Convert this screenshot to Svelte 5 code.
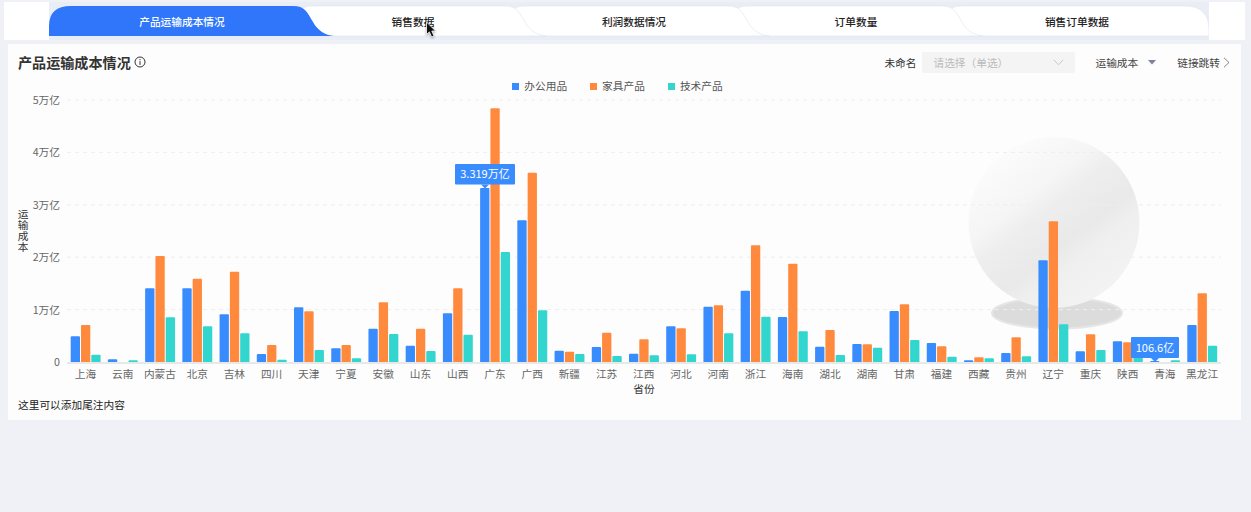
<script>
  // tab widths are the measured spans between the S-curves; nudge re-centres the label
  const tabs = [
    { label: "产品运输成本情况", w: 266, nudge: 0, active: true },
    { label: "销售数据", w: 212, nudge: 16 },
    { label: "利润数据情况", w: 223, nudge: 9 },
    { label: "订单数量", w: 214, nudge: 2 },
    { label: "销售订单数据", w: 245, nudge: 19 },
  ];

  function tabPath(w, i) {
    const left =
      i === 0 ? "M0,30 L0,20 Q0,0 22,0" : "M-24,30 L-24,18 C-20,6 -14,0 -2,0";
    const right =
      i === tabs.length - 1
        ? `L${w - 24},0 Q${w},0 ${w},24 L${w},30`
        : `L${w - 22},0 C${w - 10},0 ${w - 8},6 ${w - 2},16 C${w + 3},25 ${w + 10},29 ${w + 19},30`;
    return `${left} ${right} Z`;
  }

  const series = [
    { name: "办公用品", color: "#388cfe" },
    { name: "家具产品", color: "#ff8a3d" },
    { name: "技术产品", color: "#32d6cf" },
  ];

  // bar heights in px, [office, furniture, tech]
  const provinces = [
    ["上海", 25.7, 37, 7.3],
    ["云南", 2.7, 0, 1.7],
    ["内蒙古", 73.7, 106, 44.7],
    ["北京", 73.7, 83.3, 35.7],
    ["吉林", 47.7, 90.3, 28.7],
    ["四川", 8, 17, 2.3],
    ["天津", 54.7, 50.7, 12],
    ["宁夏", 13.7, 17, 3.7],
    ["安徽", 33.3, 59.7, 28],
    ["山东", 16.3, 33.3, 11],
    ["山西", 48.7, 73.7, 27.3],
    ["广东", 174, 253.7, 110],
    ["广西", 141.7, 189.3, 51.7],
    ["新疆", 11.3, 10.3, 8],
    ["江苏", 15, 29.3, 6],
    ["江西", 8.3, 22.7, 6.7],
    ["河北", 35.7, 33.7, 7.7],
    ["河南", 55.3, 56.7, 28.7],
    ["浙江", 71.3, 116.7, 45.3],
    ["海南", 45, 98.3, 30.7],
    ["湖北", 15.3, 32, 7],
    ["湖南", 18, 17.7, 14.3],
    ["甘肃", 51, 57.7, 22],
    ["福建", 19, 15.7, 5.3],
    ["西藏", 1.7, 4.7, 3.7],
    ["贵州", 9, 24.7, 5.7],
    ["辽宁", 101.7, 140.7, 37.7],
    ["重庆", 10.7, 27.7, 12],
    ["陕西", 20.7, 19.7, 8],
    ["青海", 0.7, 0, 1.7],
    ["黑龙江", 37, 68.7, 16.3],
  ];

  const BASE = 362;
  const TICK = 52.4;
  const yTicks = ["0", "1万亿", "2万亿", "3万亿", "4万亿", "5万亿"];
  const cx = (i) => 85.5 + 37.22 * i;
  const barOffset = [-14.8, -4.5, 5.8];

  const callouts = [
    { text: "3.319万亿", x: 455, y: 164, w: 60, h: 20.5, tip: 485 },
    { text: "106.6亿", x: 1131, y: 337, w: 48, h: 21, tip: 1155 },
  ];
</script>

<div class="tab-strip">
  <div class="side left"></div>
  <div class="tabs">
    {#each tabs as tab, i}
      <div
        class="tab"
        class:active={tab.active}
        style="width:{tab.w}px;padding-right:{tab.nudge}px;z-index:{10 - i}"
      >
        <svg class="tab-shape" width={tab.w} height="30" aria-hidden="true">
          <path d={tabPath(tab.w, i)} />
        </svg>
        <span>{tab.label}</span>
      </div>
    {/each}
  </div>
  <div class="side right"></div>
  <svg class="cursor" width="14" height="18" viewBox="0 0 14 18" aria-hidden="true">
    <path
      d="M1.5 1 L1.5 13.4 L4.4 10.9 L6.6 16 L9 15 L6.8 10 L10.6 10 Z"
      fill="#111"
      stroke="#fff"
      stroke-width="0.8"
    />
  </svg>
</div>

<section class="card">
  <header class="head">
    <div class="title">
      <h2>产品运输成本情况</h2>
      <svg width="12" height="12" viewBox="0 0 12 12" aria-hidden="true">
        <circle cx="6" cy="6" r="5" fill="none" stroke="#333" stroke-width="1" />
        <path d="M6 5.2V8.9M6 3.1V4.3" stroke="#333" stroke-width="1" />
      </svg>
    </div>
    <div class="tools">
      <span class="filter-name">未命名</span>
      <div class="select">
        <span>请选择（单选）</span>
        <svg width="11" height="7" viewBox="0 0 11 7" aria-hidden="true">
          <path d="M0.8 0.8 L5.5 5.8 L10.2 0.8" fill="none" stroke="#c4c4c4" stroke-width="0.9" />
        </svg>
      </div>
      <span class="measure">运输成本</span>
      <svg class="caret" width="8" height="5" viewBox="0 0 8 5" aria-hidden="true">
        <path d="M0 0 H8 L4 4.6 Z" fill="#7b8299" />
      </svg>
      <span class="jump">链接跳转</span>
      <svg width="7" height="11" viewBox="0 0 7 11" aria-hidden="true">
        <path d="M1 0.8 L6 5.5 L1 10.2" fill="none" stroke="#777" stroke-width="0.9" />
      </svg>
    </div>
  </header>

  <ul class="legend">
    {#each series as s}
      <li><i style="background:{s.color}"></i>{s.name}</li>
    {/each}
  </ul>

  <svg class="plot" width="1233" height="306" viewBox="8 92 1233 306">
    <defs>
      <linearGradient id="ball" x1="0.15" y1="0.05" x2="0.85" y2="0.95">
        <stop offset="0" stop-color="#fdfdfd" />
        <stop offset="0.32" stop-color="#f5f5f5" />
        <stop offset="0.42" stop-color="#eeeeee" />
        <stop offset="0.62" stop-color="#e9e9e9" />
        <stop offset="0.72" stop-color="#efefef" />
        <stop offset="1" stop-color="#f4f4f4" />
      </linearGradient>
    </defs>

    <ellipse cx="1057" cy="313" rx="65" ry="15.5" fill="#dcdcdc" stroke="#e6e6e6" stroke-width="2" />
    <circle cx="1054" cy="222.5" r="85.5" fill="url(#ball)" />

    {#each yTicks as tick, i}
      <text class="tick" x="60" y={BASE - TICK * i + 4} text-anchor="end">{tick}</text>
      {#if i > 0}
        <line class="grid" x1="67" x2="1221" y1={BASE - TICK * i} y2={BASE - TICK * i} />
      {/if}
    {/each}

    <text class="axis-title vertical" x="23" y="209">运输成本</text>

    {#each provinces as p, i}
      {#each barOffset as dx, s}
        {#if p[s + 1] > 0}
          <path
            d="M{cx(i) + dx} {BASE} v{-Math.max(p[s + 1] - 1, 0)} q0 -1 1 -1 h7.3 q1 0 1 1 v{Math.max(p[s + 1] - 1, 0)} Z"
            fill={series[s].color}
          />
        {/if}
      {/each}
      <text class="tick" x={cx(i)} y="378" text-anchor="middle">{p[0]}</text>
    {/each}

    <line class="axis" x1="67" x2="1221" y1={BASE + 1} y2={BASE + 1} />
    <text class="axis-title" x="644" y="393" text-anchor="middle">省份</text>

    {#each callouts as c}
      <path d="M{c.tip - 4} {c.y + c.h} L{c.tip} {c.y + c.h + 4} L{c.tip + 4} {c.y + c.h} Z" fill="#388cfe" />
      <rect x={c.x} y={c.y} width={c.w} height={c.h} rx="1" fill="#388cfe" />
      <text class="callout" x={c.x + c.w / 2} y={c.y + c.h / 2 + 4} text-anchor="middle">{c.text}</text>
    {/each}
  </svg>

  <p class="note">这里可以添加尾注内容</p>
</section>

<style>
  :global(body) {
    margin: 0;
    background: #eff1f6;
    font-family: "Noto Sans CJK SC", "Noto Sans", sans-serif;
  }
  .tab-strip {
    position: relative;
    display: flex;
    width: 1241px;
    height: 38px;
    margin: 2px 0 0 4px;
    background: #e9edf5;
  }
  .side {
    background: #fff;
    z-index: 20;
  }
  .side.left {
    width: 45px;
  }
  .side.right {
    width: 36px;
  }
  .tabs {
    display: flex;
    flex: 1;
    height: 30px;
    padding-top: 4px;
  }
  .tab {
    position: relative;
    display: flex;
    align-items: center;
    justify-content: center;
    box-sizing: border-box;
    height: 30px;
    font-size: 10.7px;
    font-weight: 500;
    color: #222;
  }
  .tab span {
    position: relative;
  }
  .tab-shape {
    position: absolute;
    top: 0;
    left: 0;
    overflow: visible;
  }
  .tab-shape path {
    fill: #fff;
    stroke: #e2e7f0;
    stroke-width: 0.7;
  }
  .tab.active {
    color: #fff;
  }
  .tab.active .tab-shape path {
    fill: #2f76fb;
    stroke: none;
  }
  .cursor {
    position: absolute;
    top: 19px;
    left: 421px;
    z-index: 30;
    filter: drop-shadow(0 1px 1px rgba(0, 0, 0, 0.35));
  }
  .card {
    box-sizing: border-box;
    width: 1233px;
    height: 376px;
    margin: 4px 0 0 8px;
    background: #fdfdfd;
  }
  .head {
    display: flex;
    align-items: center;
    justify-content: space-between;
    height: 36px;
    padding: 0 11px 0 10px;
  }
  .title {
    display: flex;
    align-items: center;
    gap: 3px;
  }
  h2 {
    margin: 0;
    font-size: 14.1px;
    font-weight: 600;
    color: #333;
  }
  .tools {
    display: flex;
    align-items: center;
    font-size: 10.7px;
    color: #444;
  }
  .filter-name {
    color: #333;
  }
  .select {
    display: flex;
    align-items: center;
    justify-content: space-between;
    box-sizing: border-box;
    width: 153px;
    height: 21px;
    margin: 0 20px 0 6px;
    padding: 0 11px;
    border-radius: 2px;
    background: #f4f4f5;
    color: #bbb;
  }
  .caret {
    margin: 0 21px 0 10px;
  }
  .jump {
    margin-right: 3px;
  }
  .legend {
    display: flex;
    justify-content: center;
    gap: 23px;
    height: 12px;
    margin: 0;
    padding: 0 14px 0 0;
    list-style: none;
    font-size: 10.7px;
    line-height: 12px;
    color: #555;
  }
  .legend li {
    display: flex;
    align-items: center;
    gap: 5px;
  }
  .legend i {
    width: 7px;
    height: 7px;
  }
  .plot {
    display: block;
  }
  .tick {
    font-size: 10.7px;
    fill: #666;
  }
  .axis-title {
    font-size: 10.7px;
    fill: #333;
  }
  .vertical {
    writing-mode: vertical-rl;
  }
  .grid {
    stroke: #eeeeee;
    stroke-dasharray: 4 4;
  }
  .axis {
    stroke: #e8e8e8;
    stroke-width: 2;
  }
  .callout {
    font-size: 11px;
    fill: #fff;
  }
  .note {
    margin: 0;
    padding-left: 10px;
    font-size: 10.7px;
    line-height: 14px;
    color: #222;
  }
</style>
